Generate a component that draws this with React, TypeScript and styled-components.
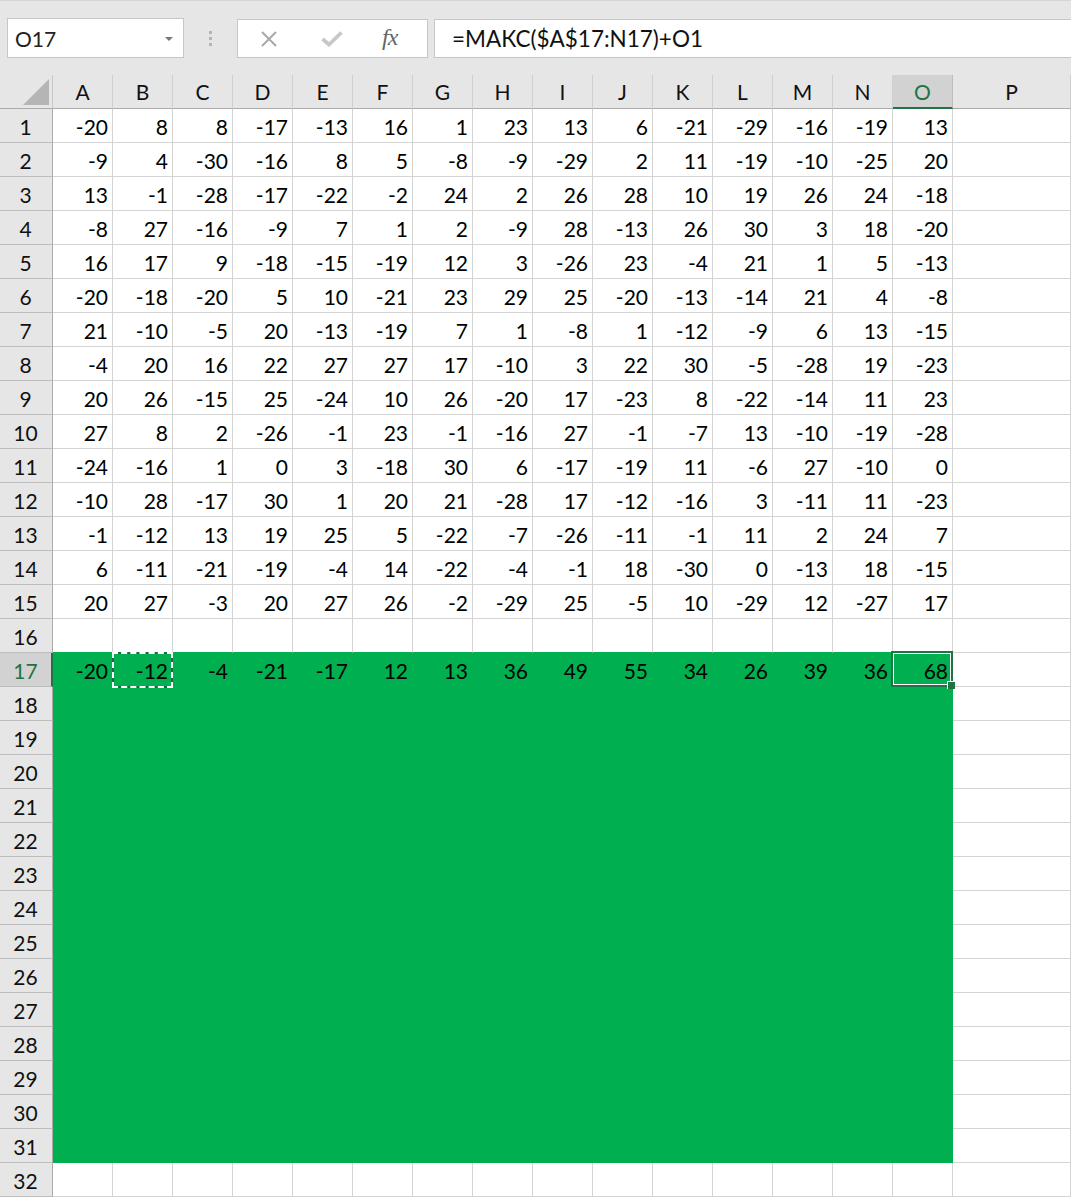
import React from 'react';
import styled, { createGlobalStyle, css } from 'styled-components';

const GREEN = '#00b050';
const DARK = '#217346';
const GRID = '#d4d4d4';

const COLS = ['A', 'B', 'C', 'D', 'E', 'F', 'G', 'H', 'I', 'J', 'K', 'L', 'M', 'N', 'O', 'P'];

const DATA: (number | null)[][] = [
  [-20, 8, 8, -17, -13, 16, 1, 23, 13, 6, -21, -29, -16, -19, 13],
  [-9, 4, -30, -16, 8, 5, -8, -9, -29, 2, 11, -19, -10, -25, 20],
  [13, -1, -28, -17, -22, -2, 24, 2, 26, 28, 10, 19, 26, 24, -18],
  [-8, 27, -16, -9, 7, 1, 2, -9, 28, -13, 26, 30, 3, 18, -20],
  [16, 17, 9, -18, -15, -19, 12, 3, -26, 23, -4, 21, 1, 5, -13],
  [-20, -18, -20, 5, 10, -21, 23, 29, 25, -20, -13, -14, 21, 4, -8],
  [21, -10, -5, 20, -13, -19, 7, 1, -8, 1, -12, -9, 6, 13, -15],
  [-4, 20, 16, 22, 27, 27, 17, -10, 3, 22, 30, -5, -28, 19, -23],
  [20, 26, -15, 25, -24, 10, 26, -20, 17, -23, 8, -22, -14, 11, 23],
  [27, 8, 2, -26, -1, 23, -1, -16, 27, -1, -7, 13, -10, -19, -28],
  [-24, -16, 1, 0, 3, -18, 30, 6, -17, -19, 11, -6, 27, -10, 0],
  [-10, 28, -17, 30, 1, 20, 21, -28, 17, -12, -16, 3, -11, 11, -23],
  [-1, -12, 13, 19, 25, 5, -22, -7, -26, -11, -1, 11, 2, 24, 7],
  [6, -11, -21, -19, -4, 14, -22, -4, -1, 18, -30, 0, -13, 18, -15],
  [20, 27, -3, 20, 27, 26, -2, -29, 25, -5, 10, -29, 12, -27, 17],
  [],
  [-20, -12, -4, -21, -17, 12, 13, 36, 49, 55, 34, 26, 39, 36, 68],
];

const ROW_COUNT = 32;

const GlobalStyle = createGlobalStyle`
  html, body {
    margin: 0;
    padding: 0;
    background: #fff;
    overflow: hidden;
  }
  body {
    font-family: Lato, "Open Sans", "Noto Sans", sans-serif;
  }
`;

const Page = styled.div`
  width: 1071px;
  height: 1197px;
  display: flex;
  flex-direction: column;
`;

const Toolbar = styled.div`
  box-sizing: border-box;
  height: 75px;
  flex-shrink: 0;
  background: #e6e6e6;
  border-top: 1px solid #d6d6d6;
  display: flex;
  align-items: flex-start;
  padding: 17px 0 0 7px;
`;

const NameBox = styled.div`
  box-sizing: border-box;
  width: 177px;
  height: 40px;
  background: #fff;
  border: 1px solid #c6c6c6;
  display: flex;
  align-items: center;
  justify-content: space-between;
  padding: 0 10px 0 7px;
  font-size: 21px;
  color: #222;
`;

const DropArrow = styled.span`
  width: 0;
  height: 0;
  border-left: 4px solid transparent;
  border-right: 4px solid transparent;
  border-top: 4px solid #777;
  margin-top: 2px;
`;

const Grip = styled.div`
  width: 53px;
  height: 40px;
  display: flex;
  flex-direction: column;
  align-items: center;
  justify-content: center;
  gap: 3px;

  span {
    width: 3px;
    height: 3px;
    background: #b4b4b4;
  }
`;

const ButtonBox = styled.div`
  box-sizing: border-box;
  width: 191px;
  height: 39px;
  background: #fff;
  border: 1px solid #c6c6c6;
  display: flex;
  align-items: center;
  padding: 0 0 0 22px;
  margin-top: 1px;
`;

const IconSlot = styled.span<{ $w: number }>`
  width: ${(p) => p.$w}px;
  display: flex;
  align-items: center;
  justify-content: flex-start;
`;

const Fx = styled.span`
  font-family: "Liberation Serif", "DejaVu Serif", serif;
  font-style: italic;
  font-size: 24px;
  color: #666;
  letter-spacing: -1px;
  margin-top: -3px;
`;

const FormulaInput = styled.div`
  box-sizing: border-box;
  flex: 1;
  height: 39px;
  margin: 1px 0 0 6px;
  background: #fff;
  border: 1px solid #c6c6c6;
  border-right: none;
  display: flex;
  align-items: center;
  padding-left: 17px;
  font-size: 22.5px;
  color: #111;
`;

const Sheet = styled.div`
  display: grid;
  grid-template-columns: 53px repeat(15, 60px) 1fr;
  grid-auto-rows: 34px;
  font-size: 21px;
`;

const Corner = styled.div`
  box-sizing: border-box;
  background: #e6e6e6;
  border-right: 1px solid #c8c8c8;
  border-bottom: 1px solid #ababab;
  position: relative;

  &::after {
    content: '';
    position: absolute;
    right: 3px;
    bottom: 3px;
    width: 0;
    height: 0;
    border-left: 26px solid transparent;
    border-bottom: 26px solid #b5b5b5;
  }
`;

const ColHeader = styled.div<{ $active?: boolean }>`
  box-sizing: border-box;
  background: ${(p) => (p.$active ? '#d2d2d2' : '#e6e6e6')};
  color: ${(p) => (p.$active ? DARK : '#111')};
  border-right: 1px solid ${(p) => (p.$active ? '#bdbdbd' : '#d0d0d0')};
  border-bottom: ${(p) => (p.$active ? `2px solid ${DARK}` : '1px solid #ababab')};
  display: flex;
  align-items: center;
  justify-content: center;
  padding-top: ${(p) => (p.$active ? 1 : 0)}px;
`;

const RowHeader = styled.div<{ $active?: boolean }>`
  box-sizing: border-box;
  background: ${(p) => (p.$active ? '#d2d2d2' : '#e6e6e6')};
  color: ${(p) => (p.$active ? DARK : '#111')};
  border-right: ${(p) => (p.$active ? `2px solid ${DARK}` : '1px solid #ababab')};
  border-bottom: 1px solid #bdbdbd;
  display: flex;
  align-items: center;
  justify-content: center;
  padding: 1px ${(p) => (p.$active ? 0 : 1)}px 0 0;
`;

const Cell = styled.div<{ $fill?: boolean; $greenBottom?: boolean }>`
  box-sizing: border-box;
  position: relative;
  background: #fff;
  color: #000;
  border-right: 1px solid ${GRID};
  border-bottom: 1px solid ${(p) => (p.$greenBottom ? GREEN : GRID)};
  display: flex;
  align-items: center;
  justify-content: flex-end;
  padding: 1px 4px 0 0;

  ${(p) =>
    p.$fill &&
    css`
      background: ${GREEN};
      border-color: ${GREEN};
    `}
`;

const ActiveBox = styled.div`
  position: absolute;
  z-index: 3;
  top: -2px;
  left: -2px;
  right: -1px;
  bottom: -1px;
  border: 2px solid ${DARK};
  box-shadow: inset 0 0 0 1px #fff;
  pointer-events: none;
`;

const FillHandle = styled.div`
  position: absolute;
  z-index: 4;
  right: -4px;
  bottom: -4px;
  width: 7px;
  height: 7px;
  background: ${DARK};
  border-top: 1px solid #fff;
  border-left: 1px solid #fff;
`;

const CopyMarquee = styled.div`
  position: absolute;
  z-index: 3;
  top: -1px;
  left: -1px;
  right: -1px;
  bottom: -2px;
  border: 2px dashed #fff;
  background: linear-gradient(${GREEN}, ${GREEN}) padding-box, #1e6b41 border-box;
  pointer-events: none;
`;

const CellText = styled.span`
  position: relative;
  z-index: 4;
`;

const CloseIcon = () => (
  <svg width="18" height="18" viewBox="0 0 18 18">
    <path d="M2 2 L16 16 M16 2 L2 16" stroke="#a9a9a9" strokeWidth="2" fill="none" />
  </svg>
);

const CheckIcon = () => (
  <svg width="22" height="17" viewBox="0 0 22 17">
    <path d="M1.5 9 L8 14.5 L20.5 2.5" stroke="#c8c8c8" strokeWidth="3.8" fill="none" strokeLinejoin="miter" />
  </svg>
);

export default function App() {
  const activeRow = 17;
  const activeCol = 14;

  const rows = [];
  for (let r = 1; r <= ROW_COUNT; r++) {
    const values = DATA[r - 1] || [];
    rows.push(
      <RowHeader key={`h${r}`} $active={r === activeRow}>
        {r}
      </RowHeader>
    );
    COLS.forEach((c, ci) => {
      const fill = ci < 15 && r >= 17 && r <= 31;
      const greenBottom = ci < 15 && r === 16;
      const v = values[ci];
      rows.push(
        <Cell key={`${c}${r}`} $fill={fill} $greenBottom={greenBottom}>
          {r === activeRow && ci === 1 && <CopyMarquee />}
          {r === activeRow && ci === activeCol && (
            <ActiveBox>
              <FillHandle />
            </ActiveBox>
          )}
          {v !== undefined && v !== null && <CellText>{v}</CellText>}
        </Cell>
      );
    });
  }

  return (
    <>
      <GlobalStyle />
      <Page>
        <Toolbar>
          <NameBox>
            <span>O17</span>
            <DropArrow />
          </NameBox>
          <Grip>
            <span />
            <span />
            <span />
          </Grip>
          <ButtonBox>
            <IconSlot $w={61}>
              <CloseIcon />
            </IconSlot>
            <IconSlot $w={61}>
              <CheckIcon />
            </IconSlot>
            <IconSlot $w={40}>
              <Fx>fx</Fx>
            </IconSlot>
          </ButtonBox>
          <FormulaInput>=МАКС($A$17:N17)+O1</FormulaInput>
        </Toolbar>
        <Sheet>
          <Corner />
          {COLS.map((c, ci) => (
            <ColHeader key={c} $active={ci === activeCol}>
              {c}
            </ColHeader>
          ))}
          {rows}
        </Sheet>
      </Page>
    </>
  );
}
